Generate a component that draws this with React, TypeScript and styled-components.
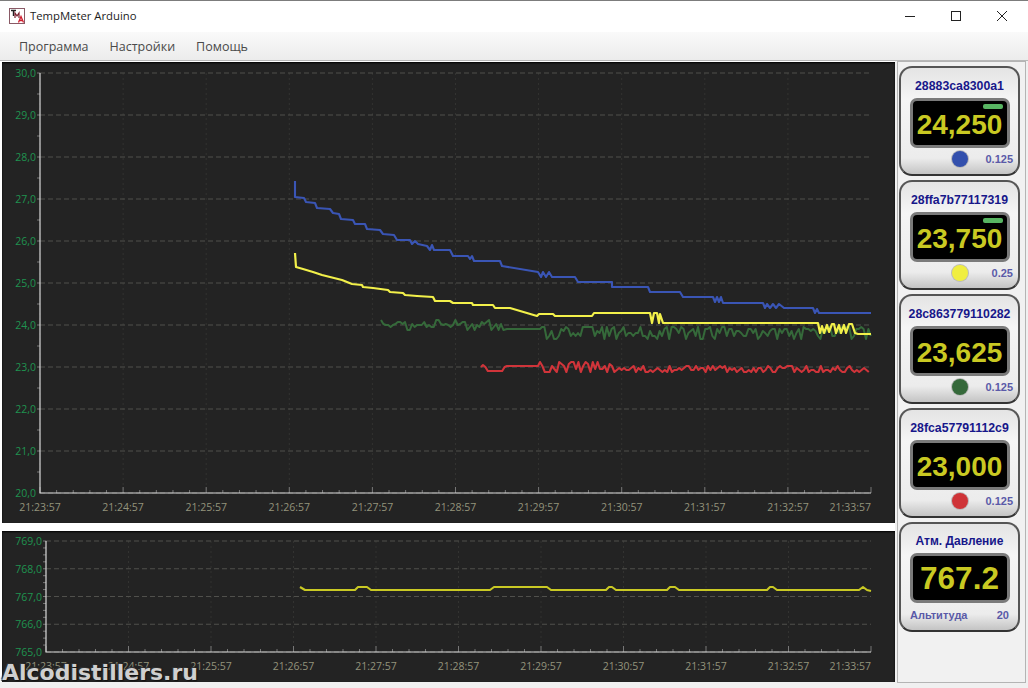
import React from 'react';
import styled, {createGlobalStyle} from 'styled-components';

type Point = [number, number];

const GlobalStyle = createGlobalStyle`
  html, body {
    margin: 0;
    padding: 0;
    background: #f4f4f4;
  }
  #root {
    width: 1028px;
    height: 688px;
    overflow: hidden;
  }
`;

// повторяемый шум, чтобы линии не менялись между запусками
function noise(seed: number) {
  let s = seed;
  return () => {
    s = (s * 16807) % 2147483647;
    return s / 2147483647;
  };
}

function jitter(from: number, to: number, levels: number[], seed: number, step = 2.4): Point[] {
  const rnd = noise(seed);
  const out: Point[] = [];
  for (let x = from; x <= to; x += step) {
    out.push([x, levels[Math.floor(rnd() * levels.length)]]);
  }
  return out;
}

const bluePoints: Point[] = [
  [295, 181], [295, 197], [304, 198], [306, 202], [315, 203], [317, 208], [330, 209], [333, 213],
  [339, 214], [341, 219], [353, 220], [355, 224], [365, 224], [367, 229], [380, 230], [383, 234],
  [394, 235], [397, 240], [410, 240], [412, 244], [415, 241], [418, 244], [427, 246], [430, 250],
  [432, 245], [434, 250], [450, 250], [453, 256], [468, 256], [470, 259], [472, 256], [474, 261],
  [500, 261], [502, 266], [538, 272], [541, 277], [543, 272], [546, 277], [549, 272], [552, 277],
  [575, 277], [578, 282], [612, 282], [612, 287], [648, 287], [650, 292], [680, 292], [683, 297],
  [713, 297], [715, 302], [717, 297], [719, 302], [721, 297], [723, 303], [763, 303], [765, 308],
  [767, 304], [770, 308], [773, 304], [776, 308], [779, 304], [784, 308], [813, 308], [815, 313],
  [817, 309], [819, 313], [871, 313],
];

const yellowPoints: Point[] = [
  [295, 253], [296, 267], [303, 269], [313, 272], [322, 275], [330, 277], [342, 280], [352, 284],
  [362, 285], [363, 287], [373, 288], [388, 290], [390, 292], [403, 293], [405, 295], [417, 296],
  [433, 297], [435, 301], [450, 301], [453, 303], [472, 303], [473, 305], [493, 305], [495, 308],
  [510, 308], [537, 316], [539, 314], [553, 314], [555, 316], [592, 316], [594, 313], [650, 313],
  [652, 323], [654, 313], [657, 313], [659, 323], [660, 314], [663, 323], [818, 323], [820, 333],
  [822, 326], [824, 333], [827, 325], [829, 332], [832, 324], [834, 324], [836, 333], [839, 325],
  [841, 333], [844, 325], [846, 333], [849, 324], [852, 324], [855, 333], [858, 334], [871, 334],
];

const greenPoints: Point[] = [
  ...jitter(381, 505, [320, 322, 324, 325, 327, 330], 71),
  [507, 329], [540, 329],
  ...jitter(542, 871, [327, 329, 331, 333, 336, 339], 913),
];

const redPoints: Point[] = [
  [481, 367],
  ...jitter(483, 505, [365, 367, 369, 371], 41),
  [507, 366], [538, 366],
  ...jitter(540, 610, [362, 364, 366, 369, 372], 377),
  ...jitter(612, 871, [366, 368, 370, 372], 2203),
];

const pressurePoints: Point[] = [
  [300, 587], [305, 590], [355, 590], [358, 587], [367, 587], [371, 590], [490, 590], [494, 587],
  [547, 587], [551, 590], [606, 590], [609, 587], [612, 587], [616, 590], [667, 590], [670, 587],
  [675, 587], [679, 590], [767, 590], [770, 587], [773, 587], [777, 590], [859, 590], [863, 587],
  [867, 590], [871, 591],
];

const timeLabels = [
  '21:23:57', '21:24:57', '21:25:57', '21:26:57', '21:27:57', '21:28:57',
  '21:29:57', '21:30:57', '21:31:57', '21:32:57', '21:33:57',
];

interface Series {
  color: string;
  width: number;
  points: Point[];
}

interface ChartProps {
  top: number;
  height: number;
  plotLeft: number;
  plotTop: number;
  plotBottom: number;
  yLabels: string[];
  minorPerMajor: number;
  labelY: number;
  series: Series[];
}

const PLOT_RIGHT = 871;
const PANEL_LEFT = 2;
const PANEL_WIDTH = 893;

function Chart({top, height, plotLeft, plotTop, plotBottom, yLabels, minorPerMajor, labelY, series}: ChartProps) {
  const rowStep = (plotBottom - plotTop) / (yLabels.length - 1);
  const colStep = (PLOT_RIGHT - plotLeft) / 10;
  const ticks: React.ReactNode[] = [];
  for (let i = 0; i < (yLabels.length - 1) * minorPerMajor; i++) {
    const y = plotTop + (i * rowStep) / minorPerMajor;
    ticks.push(<line key={`y${i}`} x1={plotLeft - 3} x2={plotLeft} y1={y} y2={y} stroke="#777" />);
  }
  for (let i = 0; i <= 50; i++) {
    const x = plotLeft + (i * colStep) / 5;
    const major = i % 5 === 0;
    ticks.push(
      <line key={`x${i}`} x1={x} x2={x} y1={plotBottom} y2={plotBottom - (major ? 6 : 3)} stroke="#777" />,
    );
  }
  return (
    <ChartPanel>
      <svg width={PANEL_WIDTH} height={height} viewBox={`${PANEL_LEFT} ${top} ${PANEL_WIDTH} ${height}`}>
        {timeLabels.slice(0, 10).map((_, i) => (
          <VGrid key={i} x1={plotLeft + i * colStep} x2={plotLeft + i * colStep} y1={plotTop} y2={plotBottom} />
        ))}
        {yLabels.map((label, i) => (
          <HGrid key={label} x1={plotLeft} x2={PLOT_RIGHT} y1={plotTop + i * rowStep} y2={plotTop + i * rowStep} />
        ))}
        {ticks}
        <Axis points={`${plotLeft},${plotTop} ${plotLeft},${plotBottom} ${PLOT_RIGHT},${plotBottom}`} />
        {yLabels.map((label, i) => (
          <YLabel key={label} x={plotLeft - 4} y={plotTop + i * rowStep + 4}>
            {label}
          </YLabel>
        ))}
        {timeLabels.map((label, i) =>
          i === 10 ? (
            <XLabel key={label} x={PLOT_RIGHT} y={labelY} textAnchor="end">
              {label}
            </XLabel>
          ) : (
            <XLabel key={label} x={plotLeft + i * colStep} y={labelY} textAnchor="middle">
              {label}
            </XLabel>
          ),
        )}
        {series.map((s) => (
          <polyline
            key={s.color}
            points={s.points.map((p) => p.join(',')).join(' ')}
            fill="none"
            stroke={s.color}
            strokeWidth={s.width}
            strokeLinejoin="round"
          />
        ))}
      </svg>
    </ChartPanel>
  );
}

function AppIcon() {
  return (
    <svg width="16" height="16" viewBox="0 0 16 16">
      <rect x="0.5" y="0.5" width="15" height="15" fill="#fff" stroke="#8a5a66" />
      <path d="M2 2.5H7M4.5 2.5V8" stroke="#222" strokeWidth="1.4" fill="none" />
      <path d="M6 10V5L8 8L10 5V10" stroke="#7a2030" strokeWidth="1.2" fill="none" />
      <path d="M9.5 14.5L12 8.5L14.5 14.5M10.5 12.5H13.5" stroke="#d02030" strokeWidth="1.3" fill="none" />
    </svg>
  );
}

function WindowControls() {
  return (
    <Controls>
      <ControlButton>
        <svg width="12" height="12" viewBox="0 0 12 12">
          <path d="M1 6.5H11" stroke="#222" strokeWidth="1" />
        </svg>
      </ControlButton>
      <ControlButton>
        <svg width="12" height="12" viewBox="0 0 12 12">
          <rect x="1.5" y="1.5" width="9" height="9" fill="none" stroke="#222" strokeWidth="1" />
        </svg>
      </ControlButton>
      <ControlButton>
        <svg width="12" height="12" viewBox="0 0 12 12">
          <path d="M1 1L11 11M11 1L1 11" stroke="#222" strokeWidth="1" />
        </svg>
      </ControlButton>
    </Controls>
  );
}

const sensors = [
  {id: '28883ca8300a1', value: '24,250', color: '#3350ad', step: '0.125', led: true},
  {id: '28ffa7b77117319', value: '23,750', color: '#f0ee40', step: '0.25', led: true},
  {id: '28c863779110282', value: '23,625', color: '#35693a', step: '0.125', led: false},
  {id: '28fca57791112c9', value: '23,000', color: '#cf3438', step: '0.125', led: false},
];

function App() {
  return (
    <Page>
      <GlobalStyle />
      <TitleBar>
        <AppIcon />
        <WindowTitle>TempMeter Arduino</WindowTitle>
        <WindowControls />
      </TitleBar>
      <MenuBar>
        <MenuItem>Программа</MenuItem>
        <MenuItem>Настройки</MenuItem>
        <MenuItem>Помощь</MenuItem>
      </MenuBar>
      <Body>
        <ChartColumn>
          <Chart
            top={62}
            height={461}
            plotLeft={40}
            plotTop={73}
            plotBottom={493}
            yLabels={['30,0', '29,0', '28,0', '27,0', '26,0', '25,0', '24,0', '23,0', '22,0', '21,0', '20,0']}
            minorPerMajor={2}
            labelY={511}
            series={[
              {color: '#3a55b5', width: 2.1, points: bluePoints},
              {color: '#35693a', width: 2, points: greenPoints},
              {color: '#d0343a', width: 2.1, points: redPoints},
              {color: '#f2f04a', width: 2.2, points: yellowPoints},
            ]}
          />
          <Chart
            top={531}
            height={151}
            plotLeft={46}
            plotTop={541}
            plotBottom={652}
            yLabels={['769,0', '768,0', '767,0', '766,0', '765,0']}
            minorPerMajor={4}
            labelY={670}
            series={[{color: '#c9c924', width: 2.1, points: pressurePoints}]}
          />
        </ChartColumn>
        <SidePanel>
          {sensors.map((s) => (
            <Card key={s.id}>
              <CardTitle>{s.id}</CardTitle>
              <Display>
                {s.led && <Led />}
                {s.value}
              </Display>
              <CardFooter>
                <Spacer />
                <Dot $color={s.color} />
                <StepValue>{s.step}</StepValue>
              </CardFooter>
            </Card>
          ))}
          <Card $compact>
            <CardTitle $small>Атм. Давление</CardTitle>
            <Display $pressure>767.2</Display>
            <AltitudeRow>
              <span>Альтитуда</span>
              <span>20</span>
            </AltitudeRow>
          </Card>
        </SidePanel>
      </Body>
      <Watermark>Alcodistillers.ru</Watermark>
    </Page>
  );
}

export default App;

const Page = styled.div`
  position: relative;
  width: 1028px;
  height: 688px;
  display: flex;
  flex-direction: column;
  background: #f4f4f4;
  font-family: 'Open Sans', 'Liberation Sans', sans-serif;
  overflow: hidden;
`;

const TitleBar = styled.div`
  height: 32px;
  box-sizing: border-box;
  flex-shrink: 0;
  display: flex;
  align-items: center;
  gap: 5px;
  padding: 0 0 2px 9px;
  background: #fff;
  border-top: 1px solid #7c7c7c;
`;

const WindowTitle = styled.span`
  font-size: 11.3px;
  color: #1c1c1c;
`;

const Controls = styled.div`
  margin-left: auto;
  margin-right: 3px;
  display: flex;
`;

const ControlButton = styled.div`
  width: 46px;
  height: 30px;
  display: flex;
  align-items: center;
  justify-content: center;
`;

const MenuBar = styled.div`
  height: 29px;
  box-sizing: border-box;
  flex-shrink: 0;
  display: flex;
  align-items: center;
  gap: 21px;
  padding-left: 19px;
  background: linear-gradient(#fafafa, #ececec);
  border-bottom: 1px solid #b8b8b8;
`;

const MenuItem = styled.span`
  font-size: 12.5px;
  color: #4a4a4a;
`;

const Body = styled.div`
  flex: 1;
  display: flex;
  min-height: 0;
  padding-bottom: 6px;
  background: #f0f0f0;
`;

const ChartColumn = styled.div`
  width: 895px;
  box-sizing: border-box;
  flex-shrink: 0;
  display: flex;
  flex-direction: column;
  gap: 8px;
  padding: 1px 0 0 2px;
  background: #fff;
`;

const ChartPanel = styled.div`
  width: 893px;
  background: #232323;
  line-height: 0;
  box-shadow: inset 0 1px 2px #000;
  svg {
    display: block;
  }
`;

const HGrid = styled.line`
  stroke: #50504c;
  stroke-dasharray: 5 3;
`;

const VGrid = styled.line`
  stroke: #333331;
  stroke-dasharray: 2 3;
`;

const Axis = styled.polyline`
  fill: none;
  stroke: #d8d8d8;
  stroke-width: 1.2;
`;

const YLabel = styled.text`
  font-family: 'Open Sans', 'Liberation Sans', sans-serif;
  font-size: 10.5px;
  fill: #1f9350;
  text-anchor: end;
`;

const XLabel = styled.text`
  font-family: 'Open Sans', 'Liberation Sans', sans-serif;
  font-size: 10.5px;
  fill: #93937c;
`;

const SidePanel = styled.div`
  width: 129px;
  height: 622px;
  box-sizing: border-box;
  flex-shrink: 0;
  display: flex;
  flex-direction: column;
  gap: 4px;
  margin-left: 2px;
  padding: 4px 0 0 1px;
  background: #f1f1f1;
  border: 1px solid #b4b4b4;
`;

const Card = styled.div<{$compact?: boolean}>`
  width: 121px;
  height: 110px;
  box-sizing: border-box;
  flex-shrink: 0;
  display: flex;
  flex-direction: column;
  align-items: center;
  padding: ${(p) => (p.$compact ? '10px' : '11px')} 9px 0;
  border-radius: 13px;
  border: 2px solid #555;
  border-bottom-color: #333;
  background: linear-gradient(#e4e4e4, #f5f5f5 30%, #ececec 85%, #c4c4c4);
`;

const CardTitle = styled.div<{$small?: boolean}>`
  height: 14px;
  line-height: 14px;
  white-space: nowrap;
  font-family: 'Liberation Sans', Arial, sans-serif;
  font-size: ${(p) => (p.$small ? '12px' : '12.3px')};
  font-weight: bold;
  color: #17178a;
`;

const Display = styled.div<{$pressure?: boolean}>`
  position: relative;
  width: 100px;
  height: 50px;
  box-sizing: border-box;
  flex-shrink: 0;
  margin-top: 5px;
  padding-top: ${(p) => (p.$pressure ? '0' : '4px')};
  display: flex;
  align-items: center;
  justify-content: center;
  background: #000;
  border: 3px solid #7a7a7a;
  border-radius: 7px;
  font-family: 'Liberation Sans', Arial, sans-serif;
  font-size: ${(p) => (p.$pressure ? '31.5px' : '28px')};
  font-weight: bold;
  color: #c9c922;
`;

const Led = styled.div`
  position: absolute;
  top: 3px;
  right: 4px;
  width: 20px;
  height: 5px;
  border-radius: 2px;
  background: #58b562;
`;

const CardFooter = styled.div`
  width: 100%;
  margin-top: 3px;
  display: grid;
  grid-template-columns: 1fr auto 1fr;
  align-items: center;
`;

const Spacer = styled.span``;

const Dot = styled.span<{$color: string}>`
  width: 16px;
  height: 16px;
  border-radius: 50%;
  background: ${(p) => p.$color};
  box-shadow: 0 0 0 1px #bbb;
`;

const StepValue = styled.span`
  justify-self: end;
  margin-right: -4px;
  font-family: 'Liberation Sans', Arial, sans-serif;
  font-size: 11px;
  font-weight: bold;
  color: #5a5aa8;
`;

const AltitudeRow = styled.div`
  width: 100%;
  margin-top: 6px;
  display: flex;
  justify-content: space-between;
  font-family: 'Liberation Sans', Arial, sans-serif;
  font-size: 11px;
  font-weight: bold;
  color: #5a5aa8;
`;

const Watermark = styled.div`
  position: absolute;
  left: 2px;
  bottom: 3px;
  font-family: 'DejaVu Sans', Verdana, sans-serif;
  font-size: 22px;
  font-weight: bold;
  line-height: 24px;
  color: #cfcfcf;
  text-shadow: 1px 1px 1px #111, -1px -1px 1px #333, 1px -1px 1px #222, -1px 1px 1px #222;
`;
